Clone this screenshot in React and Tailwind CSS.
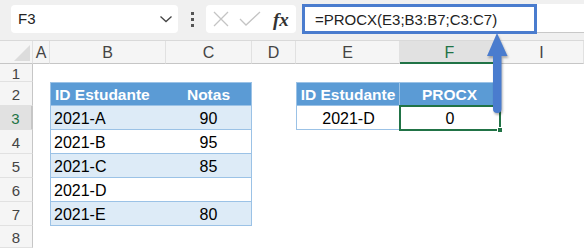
import React from "react";

const COLS = "grid-cols-[33px_17px_116px_86px_44px_104px_100px_1fr]";
const LETTERS = ["A", "B", "C", "D", "E", "F", "I"];

const tb1 = [
  { id: "2021-A", nota: "90", alt: true },
  { id: "2021-B", nota: "95", alt: false },
  { id: "2021-C", nota: "85", alt: true },
  { id: "2021-D", nota: "", alt: false },
  { id: "2021-E", nota: "80", alt: true },
];

function RowHead({ n, active }) {
  return (
    <div
      className={`flex items-center justify-center border-r border-b border-r-[#c6c6c6] border-b-[#e1e1e1] text-[15px] leading-none pt-[2px] ${
        active
          ? "bg-[#e1e1e1] text-[#217346] border-r-2 border-r-[#217346]"
          : "bg-[#f5f5f5] text-[#444]"
      }`}
    >
      {n}
    </div>
  );
}

function Toolbar() {
  return (
    <div className="flex h-[41px] items-start bg-[#f0f0f0] border-b border-[#d9d9d9] pt-[4px]">
      <div className="ml-[11px] mt-[1px] flex h-[28px] w-[167px] items-center justify-between rounded-[4px] bg-white pl-[7px] pr-[5px] text-[15px] text-[#222]">
        <span className="pt-[1px]">F3</span>
        <svg width="14" height="10" viewBox="0 0 14 10">
          <path d="M1.5 2.5 L7 7.5 L12.5 2.5" fill="none" stroke="#444" strokeWidth="1.3" />
        </svg>
      </div>
      <div className="mt-[1px] flex h-[28px] w-[28px] flex-col items-center justify-center gap-[3px]">
        <span className="h-[3px] w-[3px] bg-[#555]" />
        <span className="h-[3px] w-[3px] bg-[#555]" />
        <span className="h-[3px] w-[3px] bg-[#555]" />
      </div>
      <div className="mt-[1px] flex h-[28px] w-[90px] items-center rounded-[4px] bg-white pl-[7px]">
        <svg width="16" height="16" viewBox="0 0 16 16">
          <path d="M1 1 L15 15 M15 1 L1 15" stroke="#c4c4c4" strokeWidth="1.3" />
        </svg>
        <svg width="22" height="16" viewBox="0 0 22 16" className="ml-[10px]">
          <path d="M1 8 L7 14 L21 1" fill="none" stroke="#c4c4c4" strokeWidth="1.3" />
        </svg>
        <span className="ml-[12px] font-['Liberation_Serif',serif] text-[19px] font-bold italic leading-none text-[#333]">
          fx
        </span>
      </div>
      <div className="ml-[6px] flex h-[29px] flex-1 rounded-l-[4px] border-b border-[#c8c8c8] bg-white">
        <div className="h-[30px] w-[235px] border-[3px] border-[#4a7cce] pl-[10px] pt-[3px] text-[15px] leading-[20px] text-[#222]">
          =PROCX(E3;B3:B7;C3:C7)
        </div>
      </div>
    </div>
  );
}

export default function App() {
  return (
    <div className="relative h-[248px] w-[584px] overflow-hidden bg-white font-['Liberation_Sans',Arial,sans-serif]">
      <Toolbar />

      {/* ── Sheet ─────────────────────────────────────────────────────── */}
      <div className={`grid ${COLS} grid-rows-[23px_18px_repeat(6,24px)_1fr] h-[207px]`}>
        {/* column headers */}
        <div className="relative border-r border-b border-r-[#e1e1e1] border-b-[#c6c6c6] bg-[#f5f5f5]">
          <svg width="16" height="16" viewBox="0 0 16 16" className="absolute right-[2px] bottom-[2px]">
            <path d="M16 0 L16 16 L0 16 Z" fill="#dcdcdc" />
          </svg>
        </div>
        {LETTERS.map((l) => (
          <div
            key={l}
            className={`flex items-center justify-center border-r border-r-[#e1e1e1] text-[16px] leading-none pt-[2px] ${
              l === "F"
                ? "bg-[#e1e1e1] text-[#217346] border-b-2 border-b-[#217346]"
                : "bg-[#f5f5f5] text-[#444] border-b border-b-[#c6c6c6]"
            }`}
          >
            {l}
          </div>
        ))}

        {/* row 1 */}
        <RowHead n={1} />
        <div className="col-span-7" />

        {/* row 2: table headers */}
        <RowHead n={2} />
        <div />
        <div className="border-l border-y border-[#9bc2e6] bg-[#5b9bd5] pl-[4px] pt-[1px] text-[15.5px] font-bold leading-[22px] text-white">
          ID Estudante
        </div>
        <div className="border-r border-y border-[#9bc2e6] bg-[#5b9bd5] pt-[1px] text-center text-[15.5px] font-bold leading-[22px] text-white">
          Notas
        </div>
        <div />
        <div className="border-l border-y border-r border-[#9bc2e6] bg-[#5b9bd5] pt-[1px] text-center text-[15.5px] font-bold leading-[22px] text-white">
          ID Estudante
        </div>
        <div className="border-r border-y border-[#9bc2e6] bg-[#5b9bd5] pt-[1px] text-center text-[15.5px] font-bold leading-[22px] text-white">
          PROCX
        </div>
        <div />

        {/* rows 3–7 */}
        {tb1.map((r, i) => (
          <React.Fragment key={r.id}>
            <RowHead n={i + 3} active={i === 0} />
            <div />
            <div
              className={`border-l border-b border-[#9bc2e6] pl-[3px] pt-[1px] text-[16px] leading-[23px] text-black ${
                r.alt ? "bg-[#ddebf7]" : "bg-white"
              }`}
            >
              {r.id}
            </div>
            <div
              className={`border-r border-b border-[#9bc2e6] pt-[1px] text-center text-[16px] leading-[23px] text-black ${
                r.alt ? "bg-[#ddebf7]" : "bg-white"
              }`}
            >
              {r.nota}
            </div>
            <div />
            {i === 0 ? (
              <>
                <div className="border-l border-b border-[#9bc2e6] pt-[1px] text-center text-[16px] leading-[23px] text-black">
                  2021-D
                </div>
                <div className="relative pt-[1px] text-center text-[16px] leading-[23px] text-black">
                  0
                  <div className="absolute -left-[1px] -top-[1px] h-[26px] w-[102px] border-2 border-[#217346]" />
                  <div className="absolute -right-[3px] -bottom-[3px] h-[6px] w-[6px] border border-white bg-[#217346]" />
                </div>
              </>
            ) : (
              <>
                <div />
                <div />
              </>
            )}
            <div />
          </React.Fragment>
        ))}

        {/* row 8 */}
        <RowHead n={8} />
        <div className="col-span-7" />
      </div>

      {/* annotation arrow */}
      <svg
        width="26"
        height="86"
        viewBox="0 0 26 86"
        className="absolute left-[484px] top-[31px] drop-shadow-[1px_2px_1px_rgba(0,0,0,0.3)]"
      >
        <path d="M13 2 L23.5 25 L3 25 Z" fill="#4a7cce" />
        <path d="M9 24 L17.5 24 L17.5 78 Q17.5 82 13.25 82 Q9 82 9 78 Z" fill="#4a7cce" />
      </svg>
    </div>
  );
}
